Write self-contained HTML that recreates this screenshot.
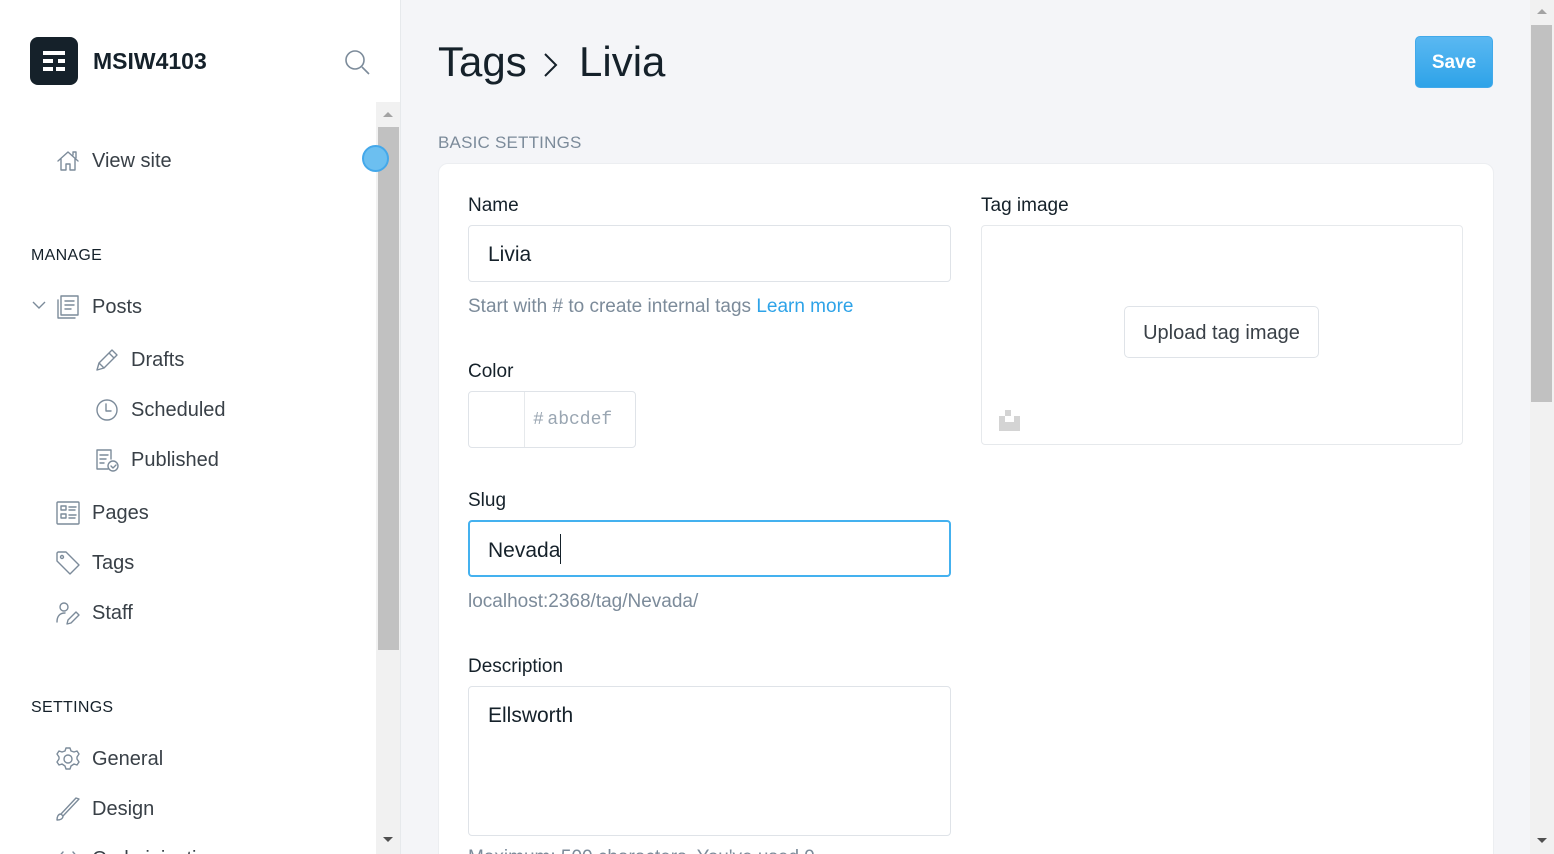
<!DOCTYPE html>
<html style="width:1554px;height:854px;overflow:hidden"><head><style>
*{box-sizing:border-box;margin:0;padding:0}
body{width:1554px;height:854px;overflow:hidden;background:#f4f5f8;font-family:"Liberation Sans",sans-serif;color:#15212a;position:relative}
.abs{position:absolute}
#side{left:0;top:0;width:401px;height:854px;background:#fff;border-right:1px solid #e6e9ec;overflow:hidden}
.nav{position:absolute;font-size:20px;color:#394047;display:flex;align-items:center}
.nav svg{width:26px;height:26px;margin-right:11px;fill:none;stroke:#7c8b9a;stroke-width:1.4;stroke-linecap:round;stroke-linejoin:round}
.hd{position:absolute;left:31px;font-size:16px;letter-spacing:.3px;color:#15212a}
.lbl{position:absolute;font-size:19px;color:#15212a}
.inp{position:absolute;background:#fff;border:1px solid #dfe3e8;border-radius:4px;font-size:21px;color:#15212a;padding-left:19px}
</style></head><body>
<div id="side" class="abs">
 <div class="abs" style="left:30px;top:37px;width:48px;height:48px;background:#15212a;border-radius:8px">
  <div class="abs" style="left:13px;top:14px;width:22px;height:4px;background:#fff"></div>
  <div class="abs" style="left:13px;top:22px;width:10px;height:4px;background:#fff"></div><div class="abs" style="left:28px;top:22px;width:7px;height:4px;background:#fff"></div>
  <div class="abs" style="left:13px;top:30px;width:10px;height:4px;background:#fff"></div><div class="abs" style="left:26px;top:30px;width:9px;height:4px;background:#fff"></div>
 </div>
 <div class="abs" style="left:93px;top:48px;font-size:23px;font-weight:bold;color:#15212a">MSIW4103</div>
 <svg class="abs" style="left:344px;top:49px" width="26" height="28" fill="none" stroke="#7c8b9a" stroke-width="1.6"><circle cx="11" cy="11" r="9"/><path d="M18 18l7 7"/></svg>
 <div class="abs" style="left:376px;top:102px;width:24px;height:752px;background:#f1f1f1"></div>
 <div class="abs" style="left:378px;top:127px;width:21px;height:523px;background:#c1c1c1"></div>
 <div class="abs" style="left:383px;top:112px;border:5px solid transparent;border-bottom:5px solid #a3a3a3;border-top:0"></div>
 <div class="abs" style="left:383px;top:837px;border:5px solid transparent;border-top:5px solid #505050;border-bottom:0"></div>
 <div class="abs" style="left:362px;top:145px;width:27px;height:27px;border-radius:50%;background:#6cbff0;border:2px solid #44a8ea"></div>

 <div class="nav" style="left:55px;top:148px"><svg viewBox="0 0 26 26"><path d="M3 13L13 4l10 9M6 11v11h5v-6h4v6h5V11M18 7V4h3v6"/></svg>View site</div>
 <div class="hd" style="top:247px">MANAGE</div>
 <svg class="abs" style="left:31px;top:299px" width="16" height="12" fill="none" stroke="#7c8b9a" stroke-width="1.4"><path d="M2 3l6 6 6-6"/></svg>
 <div class="nav" style="left:55px;top:294px"><svg viewBox="0 0 26 26"><rect x="6" y="2" width="17" height="19"/><path d="M3 6v18h17M10 7h9M10 11h9M10 15h6"/></svg>Posts</div>
 <div class="nav" style="left:94px;top:347px"><svg viewBox="0 0 26 26"><path d="M3 23l2-7L18 3l5 5L10 21zM15 6l5 5M5 16l5 5"/></svg>Drafts</div>
 <div class="nav" style="left:94px;top:397px"><svg viewBox="0 0 26 26"><circle cx="13" cy="13" r="10"/><path d="M12 7v7h5"/></svg>Scheduled</div>
 <div class="nav" style="left:94px;top:447px"><svg viewBox="0 0 26 26"><path d="M14 22H3V3h14v9M6 8h8M6 12h6M6 16h4"/><circle cx="19" cy="19" r="5"/><path d="M17 19l2 2 3-3"/></svg>Published</div>
 <div class="nav" style="left:55px;top:500px"><svg viewBox="0 0 26 26"><rect x="2" y="2" width="22" height="22" rx="1"/><rect x="6" y="6" width="5" height="4"/><rect x="6" y="14" width="5" height="4"/><path d="M14 7h7M14 10h6M14 15h7M14 18h6"/></svg>Pages</div>
 <div class="nav" style="left:55px;top:550px"><svg viewBox="0 0 26 26"><path d="M2 3v8l13 13 9-9L11 2H3z"/><circle cx="7" cy="7" r="1.5"/></svg>Tags</div>
 <div class="nav" style="left:55px;top:600px"><svg viewBox="0 0 26 26"><circle cx="9" cy="7" r="4"/><path d="M2 22c0-6 3-9 8-9M12 24l1-4 8-8 3 3-8 8z"/></svg>Staff</div>
 <div class="hd" style="top:699px">SETTINGS</div>
 <div class="nav" style="left:55px;top:746px"><svg viewBox="0 0 26 26"><circle cx="13" cy="13" r="4"/><path d="M11 2h4l1 3 3 1 3-1 2 3-2 3v2l2 3-2 3-3-1-3 2-1 3h-4l-1-3-3-2-3 1-2-3 2-3v-2L2 8l2-3 3 1 3-1z"/></svg>General</div>
 <div class="nav" style="left:55px;top:796px"><svg viewBox="0 0 26 26"><path d="M2 24c3 0 6-1 6-4l-2-2c-3 0-4 3-4 6zM8 20L24 3 21 2 6 18"/></svg>Design</div>
 <div class="nav" style="left:55px;top:846px"><svg viewBox="0 0 26 26"><path d="M8 6l-6 7 6 7M18 6l6 7-6 7"/></svg>Code injection</div>
</div>

<div class="abs" style="left:438px;top:38px;font-size:42px;color:#15212a">Tags</div>
<svg class="abs" style="left:541px;top:50px" width="20" height="30" fill="none" stroke="#15212a" stroke-width="2"><path d="M4 4l11 11L4 26"/></svg>
<div class="abs" style="left:579px;top:38px;font-size:42px;color:#15212a">Livia</div>
<div class="abs" style="left:1415px;top:36px;width:78px;height:52px;border-radius:5px;background:linear-gradient(#5ab8f2,#2ea3e8);border:1px solid #41a9ea;color:#fff;font-weight:bold;font-size:19px;text-align:center;line-height:52px">Save</div>
<div class="abs" style="left:438px;top:133px;font-size:17px;color:#7c8b9a;letter-spacing:.2px">BASIC SETTINGS</div>

<div class="abs" style="left:438px;top:163px;width:1056px;height:720px;background:#fff;border-radius:10px;border:1px solid #eceef1"></div>
<div class="lbl" style="left:468px;top:195px">Name</div>
<div class="inp" style="left:468px;top:225px;width:483px;height:57px;line-height:57px">Livia</div>
<div class="abs" style="left:468px;top:296px;font-size:19px;color:#7c8b9a">Start with # to create internal tags <span style="color:#2ea3e8">Learn more</span></div>
<div class="lbl" style="left:468px;top:361px">Color</div>
<div class="inp" style="left:468px;top:391px;width:168px;height:57px;padding:0"><div class="abs" style="left:55px;top:0;width:1px;height:55px;background:#e6e9ec"></div><div class="abs" style="left:64px;top:18px;font-size:18px;color:#9aa6b2;font-family:'Liberation Mono',monospace">#&thinsp;abcdef</div></div>
<div class="lbl" style="left:468px;top:490px">Slug</div>
<div class="inp" style="left:468px;top:520px;width:483px;height:57px;line-height:57px;border:2px solid #44b1ef;padding-left:18px">Nevada<span style="display:inline-block;width:1px;height:30px;background:#15212a;vertical-align:middle;margin-top:-4px"></span></div>
<div class="abs" style="left:468px;top:591px;font-size:19px;color:#7c8b9a">localhost:2368/tag/Nevada/</div>
<div class="lbl" style="left:468px;top:656px">Description</div>
<div class="inp" style="left:468px;top:686px;width:483px;height:150px;padding-top:17px">Ellsworth</div>
<div class="abs" style="left:468px;top:847px;font-size:19px;color:#7c8b9a">Maximum: 500 characters. You've used 9</div>

<div class="lbl" style="left:981px;top:195px">Tag image</div>
<div class="abs" style="left:981px;top:225px;width:482px;height:220px;border:1px solid #e6e9ec;border-radius:4px"></div>
<div class="abs" style="left:1124px;top:306px;width:195px;height:52px;border:1px solid #dfe3e8;border-radius:5px;font-size:20px;color:#394047;text-align:center;line-height:52px;background:#fff">Upload tag image</div>
<div class="abs" style="left:1005px;top:410px;width:6px;height:6px;background:#d4d4d4"></div>
<div class="abs" style="left:999px;top:416px;width:21px;height:15px;background:#d4d4d4"></div>
<div class="abs" style="left:1005px;top:416px;width:9px;height:6px;background:#fff"></div>

<div class="abs" style="left:1530px;top:0;width:24px;height:854px;background:#f1f1f1"></div>
<div class="abs" style="left:1531px;top:25px;width:21px;height:377px;background:#c1c1c1"></div>
<div class="abs" style="left:1537px;top:9px;border:5px solid transparent;border-bottom:5px solid #a3a3a3;border-top:0"></div>
<div class="abs" style="left:1537px;top:838px;border:5px solid transparent;border-top:5px solid #505050;border-bottom:0"></div>
</body></html>
